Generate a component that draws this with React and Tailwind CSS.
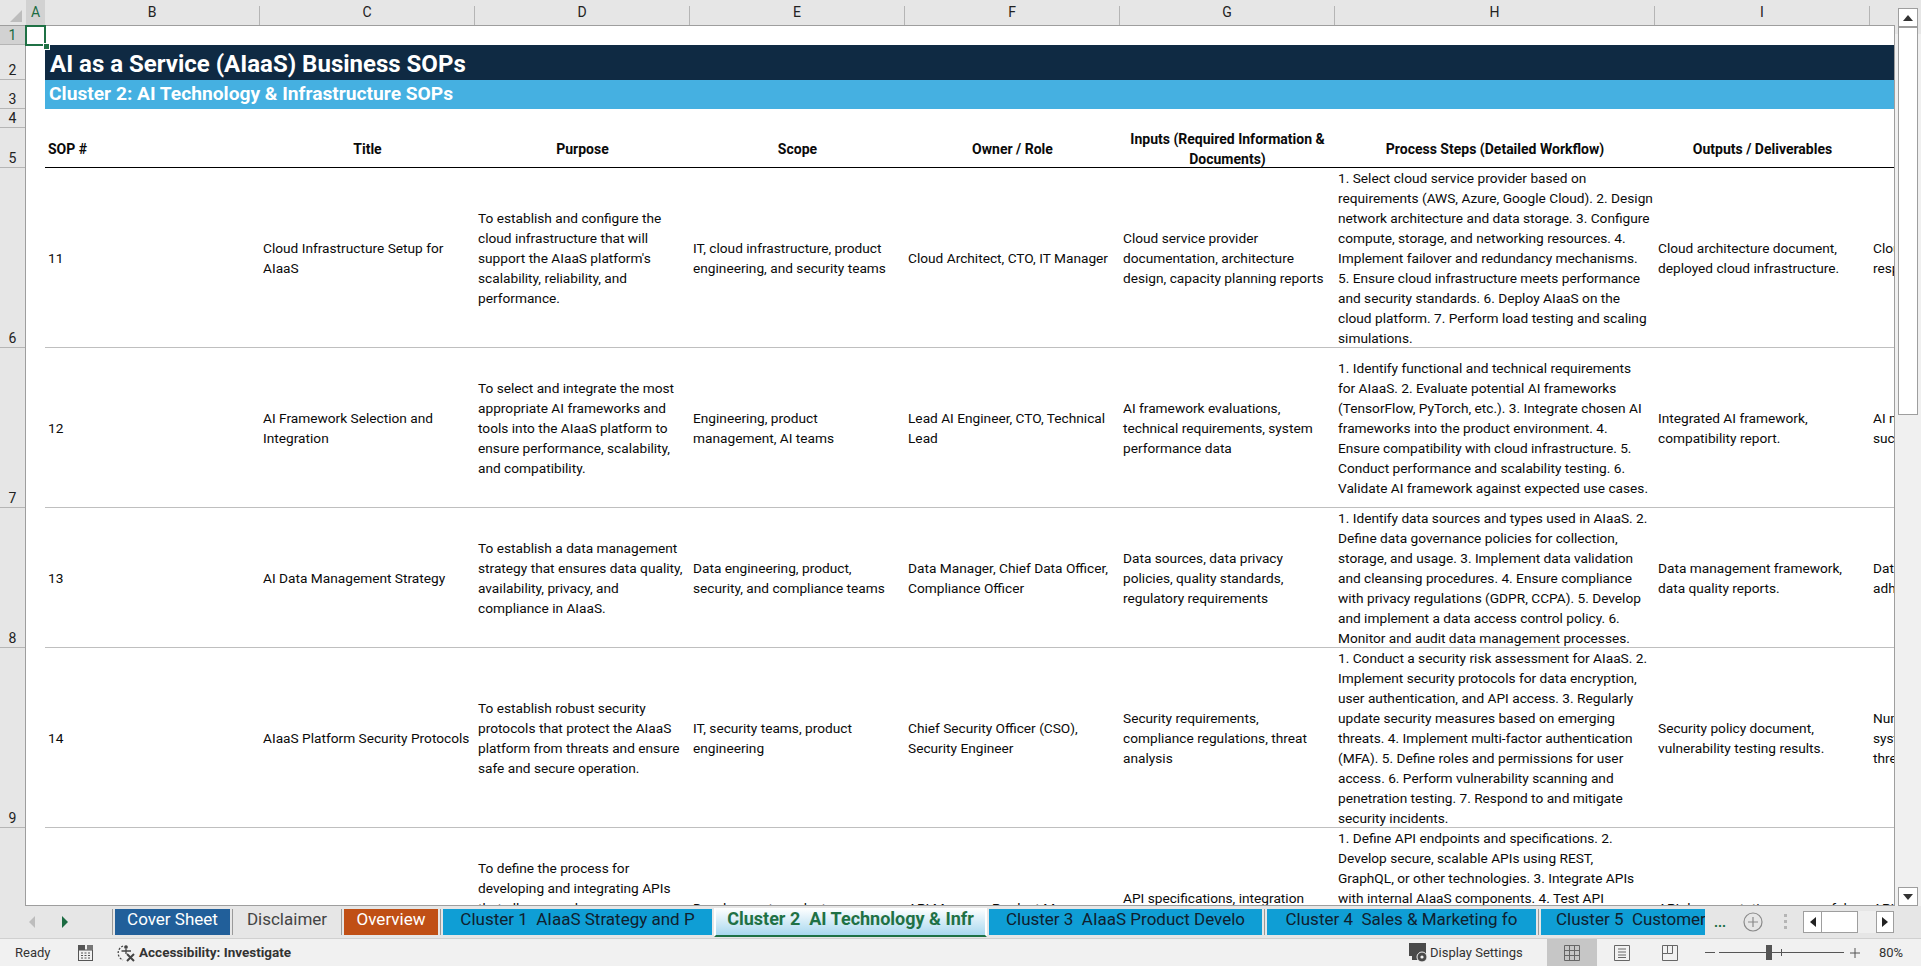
import React from "react";

const rows = [
  { n: "11", h: "h-[180px]", b: ["Cloud Infrastructure Setup for", "AIaaS"],
    d: ["To establish and configure the", "cloud infrastructure that will", "support the AIaaS platform's", "scalability, reliability, and", "performance."],
    e: ["IT, cloud infrastructure, product", "engineering, and security teams"],
    f: ["Cloud Architect, CTO, IT Manager"],
    g: ["Cloud service provider", "documentation, architecture", "design, capacity planning reports"],
    p: ["1. Select cloud service provider based on", "requirements (AWS, Azure, Google Cloud). 2. Design", "network architecture and data storage. 3. Configure", "compute, storage, and networking resources. 4.", "Implement failover and redundancy mechanisms.", "5. Ensure cloud infrastructure meets performance", "and security standards. 6. Deploy AIaaS on the", "cloud platform. 7. Perform load testing and scaling", "simulations."],
    o: ["Cloud architecture document,", "deployed cloud infrastructure."],
    k: ["Cloud uptime, system", "response time."] },
  { n: "12", h: "h-[160px]", b: ["AI Framework Selection and", "Integration"],
    d: ["To select and integrate the most", "appropriate AI frameworks and", "tools into the AIaaS platform to", "ensure performance, scalability,", "and compatibility."],
    e: ["Engineering, product", "management, AI teams"],
    f: ["Lead AI Engineer, CTO, Technical", "Lead"],
    g: ["AI framework evaluations,", "technical requirements, system", "performance data"],
    p: ["1. Identify functional and technical requirements", "for AIaaS. 2. Evaluate potential AI frameworks", "(TensorFlow, PyTorch, etc.). 3. Integrate chosen AI", "frameworks into the product environment. 4.", "Ensure compatibility with cloud infrastructure. 5.", "Conduct performance and scalability testing. 6.", "Validate AI framework against expected use cases."],
    o: ["Integrated AI framework,", "compatibility report."],
    k: ["AI model accuracy,", "success rate."] },
  { n: "13", h: "h-[140px]", b: ["AI Data Management Strategy"],
    d: ["To establish a data management", "strategy that ensures data quality,", "availability, privacy, and", "compliance in AIaaS."],
    e: ["Data engineering, product,", "security, and compliance teams"],
    f: ["Data Manager, Chief Data Officer,", "Compliance Officer"],
    g: ["Data sources, data privacy", "policies, quality standards,", "regulatory requirements"],
    p: ["1. Identify data sources and types used in AIaaS. 2.", "Define data governance policies for collection,", "storage, and usage. 3. Implement data validation", "and cleansing procedures. 4. Ensure compliance", "with privacy regulations (GDPR, CCPA). 5. Develop", "and implement a data access control policy. 6.", "Monitor and audit data management processes."],
    o: ["Data management framework,", "data quality reports."],
    k: ["Data accuracy rate,", "adherence."] },
  { n: "14", h: "h-[180px]", b: ["AIaaS Platform Security Protocols"],
    d: ["To establish robust security", "protocols that protect the AIaaS", "platform from threats and ensure", "safe and secure operation."],
    e: ["IT, security teams, product", "engineering"],
    f: ["Chief Security Officer (CSO),", "Security Engineer"],
    g: ["Security requirements,", "compliance regulations, threat", "analysis"],
    p: ["1. Conduct a security risk assessment for AIaaS. 2.", "Implement security protocols for data encryption,", "user authentication, and API access. 3. Regularly", "update security measures based on emerging", "threats. 4. Implement multi-factor authentication", "(MFA). 5. Define roles and permissions for user", "access. 6. Perform vulnerability scanning and", "penetration testing. 7. Respond to and mitigate", "security incidents."],
    o: ["Security policy document,", "vulnerability testing results."],
    k: ["Number of incidents,", "system uptime,", "threats blocked."] },
  { n: "15", h: "h-[180px]", b: ["API Development and Integration"],
    d: ["To define the process for", "developing and integrating APIs", "that allow seamless", "communication between the", "AIaaS platform and external", "systems."],
    e: ["Development, product", "engineering"],
    f: ["API Manager, Product Manager", "Lead Developer"],
    g: ["API specifications, integration", "requirements, use cases", "security standards"],
    p: ["1. Define API endpoints and specifications. 2.", "Develop secure, scalable APIs using REST,", "GraphQL, or other technologies. 3. Integrate APIs", "with internal AIaaS components. 4. Test API", "functionality and performance. 5. Document APIs", "for developers. 6. Monitor API usage.", "7. Maintain versioning and updates.", "8. Provide developer support.", "9. Review regularly."],
    o: ["API documentation, successful", "integrations."],
    k: ["API uptime,", "latency."] },
];

const cols = ["B", "C", "D", "E", "F", "G", "H", "I"];
const colW = ["w-[215px]", "w-[215px]", "w-[215px]", "w-[215px]", "w-[215px]", "w-[215px]", "w-[320px]", "w-[215px]"];

function Cell({ w, lines, center, bold }) {
  return (
    <div className={`${w} shrink-0 flex flex-col justify-center px-[3px] ${bold ? "pt-[2px]" : ""} leading-[20px] whitespace-nowrap ${center ? "text-center" : ""} ${bold ? "font-bold text-[14px]" : "text-[13.7px]"}`}>
      {lines.map((l, i) => (
        <div key={i}>{l}</div>
      ))}
    </div>
  );
}

function RowHead({ h, n, sel }) {
  return (
    <div className={`${h} flex items-end justify-center border-b border-[#b5b5b5] leading-[18px] ${sel ? "bg-[#d2d2d2] text-[#1b6b42]" : "text-[#222]"}`}>
      {n}
    </div>
  );
}

function Tab({ w, bg, fg, children }) {
  return (
    <div className={`${w} ${bg} ${fg} shrink-0 h-[26px] pb-[4px] flex items-center justify-center overflow-hidden whitespace-nowrap`}>
      {children}
    </div>
  );
}

function Sep() {
  return <div className="w-px h-[26px] bg-[#9a9a9a] shrink-0" />;
}

export default function App() {
  return (
    <div className="w-[1921px] h-[966px] overflow-hidden flex flex-col bg-[#e6e6e6] text-[14px] text-[#0a0a0a] font-['Roboto',sans-serif]">
      <div className="flex flex-1 min-h-0">
        {/* sheet area */}
        <div className="w-[1895px] flex flex-col min-h-0">
          {/* column header */}
          <div className="h-[26px] shrink-0 flex border-b border-[#9e9e9e] bg-[#e6e6e6] overflow-hidden">
            <div className="w-[26px] shrink-0 relative">
              <svg width="26" height="25" className="block">
                <path d="M22 10 V22 H10 Z" fill="#bdbdbd" />
              </svg>
            </div>
            <div className="w-[19px] shrink-0 bg-[#d2d2d2] text-[#1b6b42] flex items-center justify-center">A</div>
            {cols.map((c, i) => (
              <div key={c} className={`${colW[i]} shrink-0 flex items-center justify-center`}>
                <div className="flex-1 text-center text-[#222]">{c}</div>
                <div className="w-px h-[19px] mt-[6px] bg-[#b5b5b5]" />
              </div>
            ))}
            <div className="w-[215px] shrink-0" />
          </div>
          <div className="relative flex flex-1 min-h-0">
            {/* row header */}
            <div className="w-[26px] shrink-0 border-r border-[#9e9e9e] overflow-hidden">
              <RowHead h="h-[19px]" n="1" sel />
              <RowHead h="h-[35px]" n="2" />
              <RowHead h="h-[29px]" n="3" />
              <RowHead h="h-[19px]" n="4" />
              <RowHead h="h-[40px]" n="5" />
              <RowHead h="h-[180px]" n="6" />
              <RowHead h="h-[160px]" n="7" />
              <RowHead h="h-[140px]" n="8" />
              <RowHead h="h-[180px]" n="9" />
              <RowHead h="h-[180px]" n="10" />
            </div>
            {/* cells */}
            <div className="flex-1 min-w-0 bg-white overflow-hidden border-r border-b border-[#9e9e9e]">
              <div className="h-[19px]" />
              <div className="ml-[19px] h-[35px] bg-[#0f2a43] text-white font-bold text-[24px] flex items-center pl-[5px] pt-[3px]">
                AI as a Service (AIaaS) Business SOPs
              </div>
              <div className="ml-[19px] h-[29px] bg-[#45b0e1] text-white font-bold text-[19.2px] flex items-center pl-[4px]">
                Cluster 2: AI Technology &amp; Infrastructure SOPs
              </div>
              <div className="h-[19px]" />
              <div className="ml-[19px] h-[40px] flex border-b border-black">
                <Cell w="w-[215px]" lines={["SOP #"]} bold />
                <Cell w="w-[215px]" lines={["Title"]} bold center />
                <Cell w="w-[215px]" lines={["Purpose"]} bold center />
                <Cell w="w-[215px]" lines={["Scope"]} bold center />
                <Cell w="w-[215px]" lines={["Owner / Role"]} bold center />
                <Cell w="w-[215px]" lines={["Inputs (Required Information &", "Documents)"]} bold center />
                <Cell w="w-[320px]" lines={["Process Steps (Detailed Workflow)"]} bold center />
                <Cell w="w-[215px]" lines={["Outputs / Deliverables"]} bold center />
              </div>
              {rows.map((r) => (
                <div key={r.n} className={`ml-[19px] ${r.h} flex border-b border-[#bfbfbf]`}>
                  <Cell w="w-[215px]" lines={[r.n]} />
                  <Cell w="w-[215px]" lines={r.b} />
                  <Cell w="w-[215px]" lines={r.d} />
                  <Cell w="w-[215px]" lines={r.e} />
                  <Cell w="w-[215px]" lines={r.f} />
                  <Cell w="w-[215px]" lines={r.g} />
                  <Cell w="w-[320px]" lines={r.p} />
                  <Cell w="w-[215px]" lines={r.o} />
                  <Cell w="w-[215px]" lines={r.k} />
                </div>
              ))}
            </div>
            {/* selected cell */}
            <div className="absolute left-[25px] top-[-1px] w-[21px] h-[21px] border-2 border-[#1f7145]" />
            <div className="absolute left-[43px] top-[17px] w-[5px] h-[5px] bg-[#1f7145] border border-white box-content" />
          </div>
        </div>
        {/* vertical scrollbar */}
        <div className="w-[26px] shrink-0 flex flex-col bg-[#e6e6e6]">
          <div className="h-[8px] shrink-0" />
          <div className="flex-1 min-h-0 flex flex-col items-start bg-[linear-gradient(to_bottom,#e6e6e6_26px,#f0f0f0_26px)]">
            <div className="ml-[3px] w-[20px] h-[19px] bg-white border border-[#9e9e9e] flex items-center justify-center shrink-0">
              <svg width="10" height="6"><path d="M5 0 L10 6 H0 Z" fill="#333" /></svg>
            </div>
            <div className="ml-[3px] w-[20px] h-[388px] bg-white border border-[#9e9e9e] shrink-0" />
            <div className="flex-1" />
            <div className="ml-[3px] w-[20px] h-[19px] bg-white border border-[#9e9e9e] flex items-center justify-center shrink-0">
              <svg width="10" height="6"><path d="M0 0 H10 L5 6 Z" fill="#333" /></svg>
            </div>
          </div>
        </div>
      </div>

      {/* tab strip */}
      <div className="h-[33px] shrink-0 flex items-center bg-[#e6e6e6] border-b border-[#d0d0d0] text-[17px] pb-[1px]">
        <div className="w-[112px] shrink-0 flex items-center pl-[29px] gap-[25px]">
          <svg width="7" height="12"><path d="M6 0 V12 L0 6 Z" fill="#bdbdbd" /></svg>
          <svg width="7" height="12"><path d="M1 0 V12 L7 6 Z" fill="#1b6b42" /></svg>
        </div>
        <Sep />
        <div className="w-[2px] shrink-0" />
        <Tab w="w-[115px]" bg="bg-[#215f9a]" fg="text-white">Cover Sheet</Tab>
        <div className="w-[2px] shrink-0" />
        <Sep />
        <Tab w="w-[108px]" bg="bg-transparent" fg="text-[#444]">Disclaimer</Tab>
        <Sep />
        <div className="w-[2px] shrink-0" />
        <Tab w="w-[94px]" bg="bg-[#c04f15]" fg="text-white">Overview</Tab>
        <div className="w-[2px] shrink-0" />
        <Sep />
        <div className="w-[2px] shrink-0" />
        <Tab w="w-[269px]" bg="bg-[#0f9ed5]" fg="text-[#10202e]">Cluster 1&nbsp;&nbsp;AIaaS Strategy and P</Tab>
        <div className="w-[2px] shrink-0" />
        <div className="w-[273px] h-[29px] shrink-0 -mb-[1px] pb-[5px] flex items-center justify-center whitespace-nowrap font-bold text-[18px] text-[#1f7145] border-x-2 border-t-0 border-white border-b-2 border-b-[#1f7145] bg-[linear-gradient(to_bottom,#ffffff,#a9d8ef)]">
          Cluster 2&nbsp;&nbsp;AI Technology &amp; Infr
        </div>
        <div className="w-[2px] shrink-0" />
        <Tab w="w-[273px]" bg="bg-[#0f9ed5]" fg="text-[#10202e]">Cluster 3&nbsp;&nbsp;AIaaS Product Develo</Tab>
        <div className="w-[2px] shrink-0" />
        <Sep />
        <div className="w-[2px] shrink-0" />
        <Tab w="w-[269px]" bg="bg-[#0f9ed5]" fg="text-[#10202e]">Cluster 4&nbsp;&nbsp;Sales &amp; Marketing fo</Tab>
        <div className="w-[2px] shrink-0" />
        <Sep />
        <div className="w-[2px] shrink-0" />
        <div className="w-[164px] h-[26px] pb-[4px] shrink-0 bg-[#0f9ed5] text-[#10202e] flex items-center pl-[15px] overflow-hidden whitespace-nowrap">
          Cluster 5&nbsp;&nbsp;Customer Success
        </div>
        <div className="w-[30px] shrink-0 text-center text-[#1b6b42] text-[14px] font-bold leading-none">...</div>
        <div className="w-[36px] shrink-0 flex justify-center">
          <svg width="20" height="20" viewBox="0 0 20 20" fill="none" stroke="#8a8a8a" strokeWidth="1.2">
            <circle cx="10" cy="10" r="9" />
            <path d="M10 5 V15 M5 10 H15" />
          </svg>
        </div>
        <div className="w-[26px] shrink-0 flex flex-col items-center gap-[3px] pl-[3px]">
          <div className="w-[3px] h-[3px] bg-[#b5b5b5]" />
          <div className="w-[3px] h-[3px] bg-[#b5b5b5]" />
          <div className="w-[3px] h-[3px] bg-[#b5b5b5]" />
        </div>
        <div className="ml-[6px] w-[91px] h-[22px] shrink-0 flex bg-[#efefef]">
          <div className="w-[19px] bg-white border border-[#9e9e9e] flex items-center justify-center">
            <svg width="6" height="10"><path d="M6 0 V10 L0 5 Z" fill="#222" /></svg>
          </div>
          <div className="w-[36px] bg-white border-y border-r border-[#9e9e9e]" />
          <div className="flex-1" />
          <div className="w-[18px] bg-white border border-[#9e9e9e] flex items-center justify-center">
            <svg width="6" height="10"><path d="M0 0 V10 L6 5 Z" fill="#222" /></svg>
          </div>
        </div>
      </div>

      {/* status bar */}
      <div className="h-[27px] shrink-0 flex items-center bg-[#f1f1f1] text-[13px] text-[#333]">
        <span className="ml-[15px] w-[63px]">Ready</span>
        <svg width="15" height="16" viewBox="0 0 15 16" className="shrink-0">
          <rect x="0.5" y="5" width="14" height="10.5" fill="none" stroke="#555" />
          <path d="M3 8h2M6.5 8h2M10 8h2M3 10.5h2M6.5 10.5h2M10 10.5h2M3 13h2M6.5 13h2M10 13h2" stroke="#555" />
          <rect x="0" y="0" width="7" height="5" fill="#555" />
          <rect x="9" y="0" width="6" height="5" fill="#777" />
        </svg>
        <svg width="20" height="20" viewBox="0 0 20 20" fill="none" stroke="#444" strokeWidth="1.3" className="ml-[23px] shrink-0">
          <path d="M7 3 A7.5 7.5 0 0 0 7 17" strokeDasharray="2 1.5" />
          <circle cx="10" cy="4" r="1.2" fill="#444" />
          <path d="M5.5 8 H15 M10 6 V11" />
          <path d="M11 11 L18 18 M18 11 L11 18" strokeWidth="2" />
        </svg>
        <span className="ml-[3px] font-bold text-[13.5px]">Accessibility: Investigate</span>
        <div className="flex-1" />
        <svg width="22" height="22" viewBox="0 0 22 22" className="shrink-0">
          <rect x="1" y="1" width="17" height="13" fill="#4a4a4a" />
          <rect x="4" y="14" width="8" height="4" fill="#4a4a4a" />
          <circle cx="14" cy="15" r="5" fill="#4a4a4a" stroke="#f1f1f1" />
          <circle cx="14" cy="15" r="1.6" fill="#f1f1f1" />
        </svg>
        <span className="w-[117px]">Display Settings</span>
        <div className="w-[50px] h-[27px] bg-[#c6c6c6] flex items-center justify-center shrink-0">
          <svg width="16" height="16" fill="none" stroke="#666"><path d="M.5.5h15v15H.5zM5.5.5v15M10.5.5v15M.5 5.5h15M.5 10.5h15" /></svg>
        </div>
        <div className="w-[50px] flex justify-center shrink-0">
          <svg width="16" height="16" fill="none" stroke="#666"><path d="M.5.5h15v15H.5zM4 4h8M4 7h8M4 10h8M4 12.5h8" /></svg>
        </div>
        <div className="w-[46px] flex justify-center shrink-0">
          <svg width="16" height="16" fill="none" stroke="#666"><path d="M.5.5h15v15H.5zM5.5.5v8h5v-8M.5 8.5h5" /></svg>
        </div>
        <div className="w-[10px] h-px bg-[#555] ml-[12px] shrink-0" />
        <div className="ml-[4px] w-[125px] h-px bg-[#555] shrink-0 relative">
          <div className="absolute left-[47px] -top-[7px] w-[6px] h-[15px] bg-[#555]" />
          <div className="absolute left-[62px] -top-[3px] w-px h-[7px] bg-[#555]" />
        </div>
        <svg width="10" height="10" className="ml-[6px] shrink-0"><path d="M5 0V10M0 5H10" stroke="#555" /></svg>
        <span className="ml-[19px] w-[42px]">80%</span>
      </div>
    </div>
  );
}
